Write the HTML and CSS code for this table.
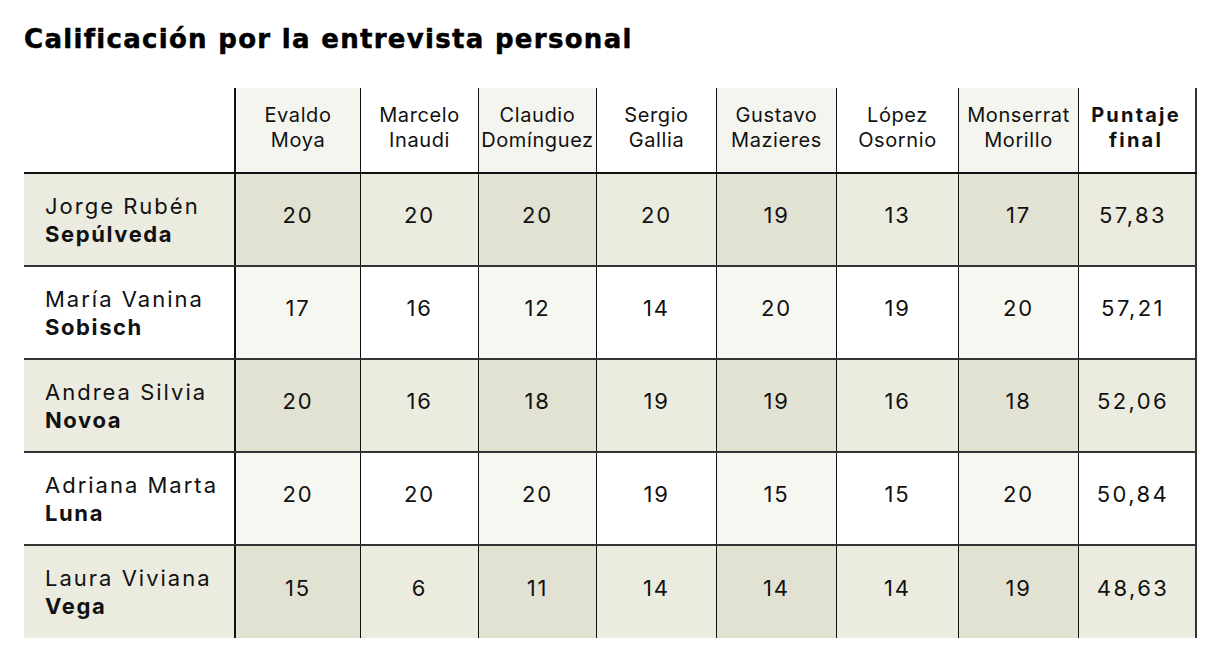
FILE: index.html
```html
<!DOCTYPE html>
<html lang="es">
<head>
<meta charset="utf-8">
<title>Calificación por la entrevista personal</title>
<link rel="stylesheet" href="styles.css">
</head>
<body>
<main class="page">
  <h1 class="title">Calificación por la entrevista personal</h1>
  <div class="table">
    <div class="row head">
      <div class="cell name"></div>
      <div class="cell jur alt"><span>Evaldo<br>Moya</span></div>
      <div class="cell jur"><span>Marcelo<br>Inaudi</span></div>
      <div class="cell jur alt"><span>Claudio<br>Domínguez</span></div>
      <div class="cell jur"><span>Sergio<br>Gallia</span></div>
      <div class="cell jur alt"><span>Gustavo<br>Mazieres</span></div>
      <div class="cell jur"><span>López<br>Osornio</span></div>
      <div class="cell jur alt"><span>Monserrat<br>Morillo</span></div>
      <div class="cell jur total"><span>Puntaje<br>final</span></div>
    </div>
    <div class="row shade">
      <div class="cell name"><span>Jorge Rubén<br><b>Sepúlveda</b></span></div>
      <div class="cell alt">20</div><div class="cell">20</div><div class="cell alt">20</div><div class="cell">20</div>
      <div class="cell alt">19</div><div class="cell">13</div><div class="cell alt">17</div><div class="cell total">57,83</div>
    </div>
    <div class="row">
      <div class="cell name"><span>María Vanina<br><b>Sobisch</b></span></div>
      <div class="cell alt">17</div><div class="cell">16</div><div class="cell alt">12</div><div class="cell">14</div>
      <div class="cell alt">20</div><div class="cell">19</div><div class="cell alt">20</div><div class="cell total">57,21</div>
    </div>
    <div class="row shade">
      <div class="cell name"><span>Andrea Silvia<br><b>Novoa</b></span></div>
      <div class="cell alt">20</div><div class="cell">16</div><div class="cell alt">18</div><div class="cell">19</div>
      <div class="cell alt">19</div><div class="cell">16</div><div class="cell alt">18</div><div class="cell total">52,06</div>
    </div>
    <div class="row">
      <div class="cell name"><span>Adriana Marta<br><b>Luna</b></span></div>
      <div class="cell alt">20</div><div class="cell">20</div><div class="cell alt">20</div><div class="cell">19</div>
      <div class="cell alt">15</div><div class="cell">15</div><div class="cell alt">20</div><div class="cell total">50,84</div>
    </div>
    <div class="row shade last">
      <div class="cell name"><span>Laura Viviana<br><b>Vega</b></span></div>
      <div class="cell alt">15</div><div class="cell">6</div><div class="cell alt">11</div><div class="cell">14</div>
      <div class="cell alt">14</div><div class="cell">14</div><div class="cell alt">19</div><div class="cell total">48,63</div>
    </div>
  </div>
</main>
</body>
</html>
```

FILE: styles.css
```css
* { box-sizing: border-box; }
html, body { margin: 0; padding: 0; background: #ffffff; }
body { color: #111111; font-family: "Inter", "Liberation Sans", sans-serif; }

.page { padding: 24px 0 0 24px; width: 1219px; height: 667px; }

.title {
  margin: 0;
  font-family: "DejaVu Sans", "Liberation Sans", sans-serif;
  font-weight: 700;
  font-size: 26px;
  line-height: 30px;
  letter-spacing: 1.3px;
  -webkit-text-stroke: 0.5px #000;
  color: #000;
  height: 64px;
}

.table { width: 1173px; }

.row {
  display: grid;
  grid-template-columns: 210px 126px 118px 118px 120px 120px 122px 120px 119px;
  height: 93px;
  border-bottom: 2px solid #333;
}
.row.head { height: 86px; border-bottom: 2px solid #111; }
.row.last { height: 92px; border-bottom: none; }

.cell {
  display: flex;
  align-items: center;
  justify-content: center;
  text-align: center;
  border-left: 1px solid #111;
  font-size: 22px;
  letter-spacing: 1.8px;
  padding-bottom: 9px;
  white-space: nowrap;
}
.cell.name {
  border-left: none;
  justify-content: flex-start;
  text-align: left;
  padding-left: 21px;
  padding-bottom: 0;
  line-height: 28px;
  letter-spacing: 2px;
}
.cell.name + .cell { border-left: 2px solid #111; }
.cell.total { border-right: 2px solid #333; letter-spacing: 2.4px; padding-right: 8px; }
.cell b { font-weight: 700; letter-spacing: 1.6px; }

.cell.jur {
  font-size: 20px;
  letter-spacing: 0.6px;
  line-height: 25px;
  padding-bottom: 4px;
}
.head .cell.total {
  font-weight: 700;
  letter-spacing: 2.2px;
  padding-right: 2px;
}
.head .alt { background: #f5f5ef; }

.shade .cell { background: #ebebdf; }
.shade .cell.alt { background: #e2e2d3; }
.row:not(.head):not(.shade) .cell.alt { background: #f7f7f2; }
```
